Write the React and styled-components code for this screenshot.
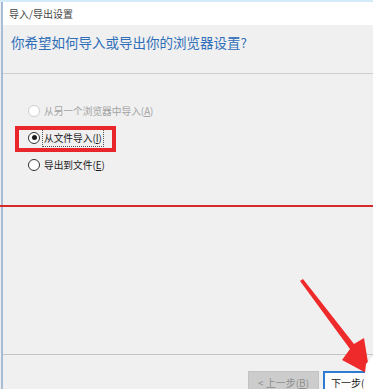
import styled, { createGlobalStyle } from "styled-components";

const GlobalStyle = createGlobalStyle`
  html, body {
    margin: 0;
    padding: 0;
    background: #ffffff;
  }
  body {
    font-family: "Noto Sans CJK SC", "Noto Sans", sans-serif;
  }
`;

const Page = styled.div`
  position: relative;
  width: 373px;
  height: 389px;
  overflow: hidden;
  background: #f0f0f0;
  border-top: 2px solid #d3ebf8;
  box-sizing: border-box;
  display: flex;
  flex-direction: column;
  padding-left: 1px;
`;

const Frame = styled.div`
  flex: 1;
  display: flex;
  flex-direction: column;
  border-left: 2px solid #a7bdd6;
  min-width: 0;
`;

const TitleBar = styled.div`
  height: 23px;
  background: #ffffff;
  display: flex;
  align-items: center;
  padding-left: 6px;
  font-size: 10px;
  color: #444444;
`;

const Header = styled.div`
  height: 49px;
  padding: 8px 0 0 8px;
  box-sizing: border-box;
  border-bottom: 1px solid #cdcdcd;
`;

const Heading = styled.div`
  font-size: 13.5px;
  line-height: 18px;
  color: #2f6eb8;
`;

const Options = styled.div`
  display: flex;
  flex-direction: column;
  gap: 14px;
  padding: 30px 0 0 25px;
  height: 131px;
  box-sizing: border-box;
`;

const Option = styled.div`
  display: flex;
  align-items: center;
  gap: 3px;
  height: 13px;
  font-size: 9.7px;
  color: ${(p) => (p.$disabled ? "#a3a3a3" : "#1b1b1b")};
`;

const Radio = styled.span`
  width: 10px;
  height: 10px;
  border-radius: 50%;
  border: 1px solid ${(p) => (p.$disabled ? "#cfcfcf" : "#333333")};
  background: #ffffff;
  display: flex;
  align-items: center;
  justify-content: center;
  flex-shrink: 0;
  &::after {
    content: "";
    width: 5px;
    height: 5px;
    border-radius: 50%;
    background: ${(p) => (p.$checked ? "#1b1b1b" : "transparent")};
  }
`;

const Label = styled.span`
  padding: 1px 1px;
  outline: ${(p) => (p.$focused ? "1px dotted #555" : "none")};
`;

const RedRule = styled.div`
  height: 2px;
  background: #d52b2b;
  margin-left: -3px;
`;

const Spacer = styled.div`
  flex: 1;
`;

const Footer = styled.div`
  border-top: 1px solid #c4c4c4;
  height: 35px;
  box-sizing: border-box;
  display: flex;
  align-items: flex-start;
  padding: 16px 0 0 245px;
  gap: 4px;
`;

const Button = styled.div`
  width: ${(p) => p.$w}px;
  height: 22px;
  flex-shrink: 0;
  box-sizing: border-box;
  display: flex;
  align-items: center;
  justify-content: ${(p) => (p.$primary ? "flex-start" : "center")};
  padding-left: ${(p) => (p.$primary ? "6px" : "0")};
  font-size: 10px;
  white-space: nowrap;
  background: ${(p) => (p.$primary ? "#fdfdfd" : "#cccccc")};
  border: ${(p) => (p.$primary ? "2px solid #2f7bd2" : "1px solid #c3c3c3")};
  color: ${(p) => (p.$primary ? "#1b1b1b" : "#8c8c8c")};
`;

const Mark = styled.div`
  position: absolute;
  left: 15px;
  top: 124px;
  width: 101px;
  height: 26px;
  box-sizing: border-box;
  border: 4px solid #e8262c;
`;

const ArrowLayer = styled.svg`
  position: absolute;
  left: 0;
  top: 0;
  pointer-events: none;
`;

export default function App() {
  return (
    <>
      <GlobalStyle />
      <Page>
        <Frame>
          <TitleBar>导入/导出设置</TitleBar>
          <Header>
            <Heading>你希望如何导入或导出你的浏览器设置?</Heading>
          </Header>
          <Options>
            <Option $disabled>
              <Radio $disabled />
              <Label>从另一个浏览器中导入(<u>A</u>)</Label>
            </Option>
            <Option>
              <Radio $checked />
              <Label $focused>从文件导入(<u>I</u>)</Label>
            </Option>
            <Option>
              <Radio />
              <Label>导出到文件(<u>E</u>)</Label>
            </Option>
          </Options>
          <RedRule />
          <Spacer />
          <Footer>
            <Button $w={71}>&lt; 上一步(<u>B</u>)</Button>
            <Button $w={72} $primary>下一步(</Button>
          </Footer>
        </Frame>
        <Mark />
        <ArrowLayer width="373" height="389" viewBox="0 0 373 389">
          <polygon
            points="300,279 303,277 354,342 364,336 370,373 342,358 350,347"
            fill="#ee2a2a"
          />
          <polygon points="366,362 373,354 373,389 363,389" fill="#ffffff" />
        </ArrowLayer>
      </Page>
    </>
  );
}
